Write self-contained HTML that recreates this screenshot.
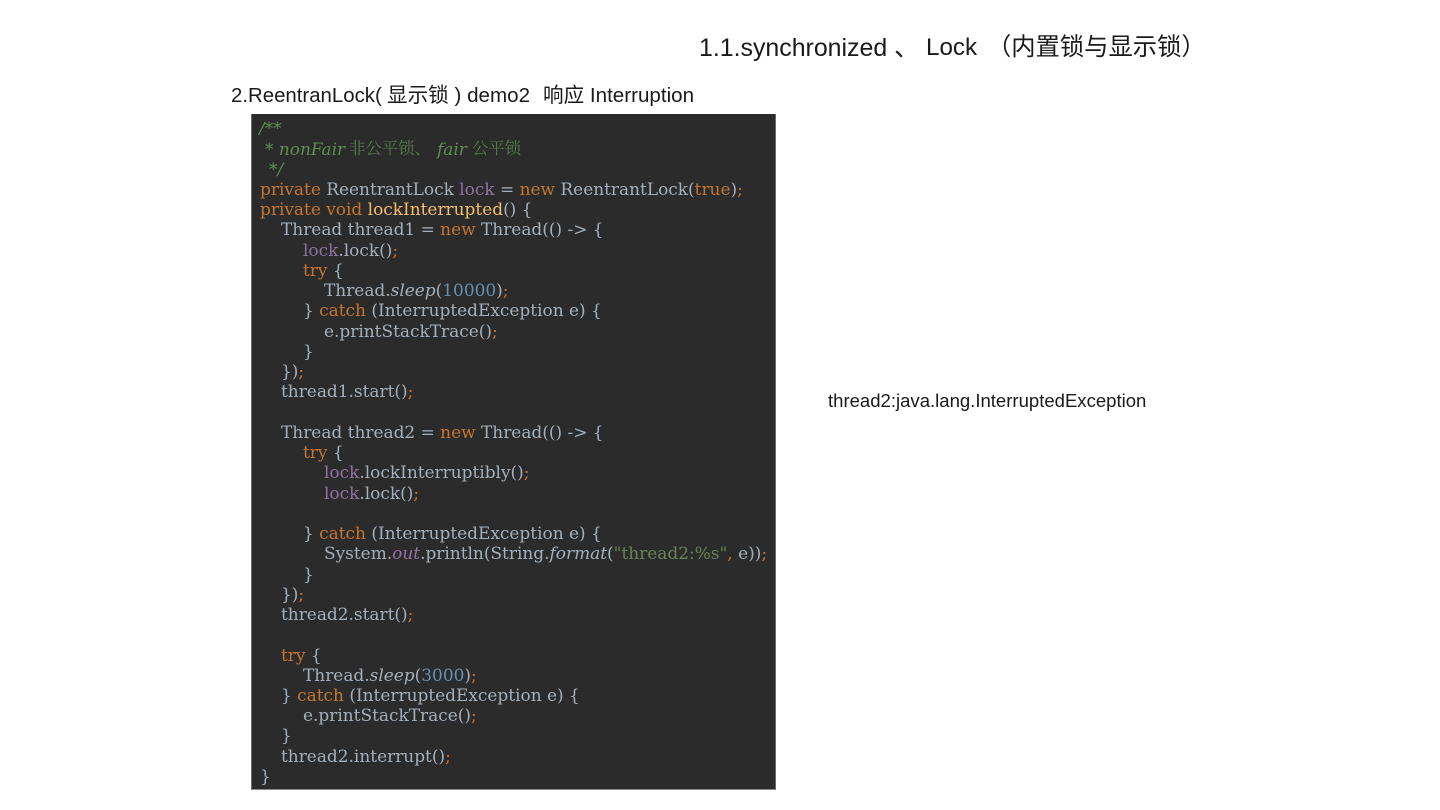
<!DOCTYPE html>
<html>
<head>
<meta charset="utf-8">
<style>
html,body{margin:0;padding:0;background:#fff;width:1440px;height:810px;overflow:hidden}
.t{position:absolute;white-space:pre;color:#1a1a1a;font-family:"Liberation Sans","Noto Sans CJK SC",sans-serif}
#box{position:absolute;left:251px;top:114px;width:525px;height:676px;background:#2b2b2b;box-sizing:border-box;border-left:1px solid #6a6a6a;border-right:1px solid #6a6a6a;border-bottom:1px solid #8a8a8a}
.l{position:absolute;white-space:pre;font-family:"DejaVu Serif","Noto Serif CJK SC",serif;font-size:16.96px;line-height:20px;color:#a3b0bd;left:260px;margin-top:0}
.k{color:#c5752f}
.p{color:#9272a3}
.m{color:#f5bf69}
.n{color:#6490b3}
.c{color:#5d8f51;font-style:italic}
.z{font-style:normal;position:absolute;top:0;font-size:16.4px;color:#527f48}
.s{color:#688357}
i{font-style:italic}
</style>
</head>
<body>
<div class="t" style="left:699px;top:33px;font-size:24.9px;line-height:30px">1.1.synchronized 、</div>
<div class="t" style="left:926px;top:33px;font-size:24.2px;line-height:30px">Lock</div>
<div class="t" style="left:987px;top:33px;font-size:24.3px;line-height:30px">（内置锁与显示锁）</div>
<div class="t" style="left:231px;top:82px;font-size:20.4px;line-height:28px">2.ReentranLock(</div>
<div class="t" style="left:387px;top:82px;font-size:20.6px;line-height:28px">显示锁 ) demo2</div>
<div class="t" style="left:543px;top:82px;font-size:20.6px;line-height:28px">响应 Interruption</div>
<div id="box"></div>
<div class="l c" style="top:118px;left:259px">/**</div>
<div class="l c" style="top:139px;left:265px;width:280px;height:20px">* nonFair<span class="z" style="left:84px">非公平锁、</span><span style="position:absolute;left:172px;top:0">fair</span><span class="z" style="left:207px">公平锁</span></div>
<div class="l c" style="top:159px;left:269px">*/</div>
<div class="l" style="top:179px"><span class="k">private</span> ReentrantLock <span class="p">lock</span> = <span class="k">new</span> ReentrantLock(<span class="k">true</span>)<span class="k">;</span></div>
<div class="l" style="top:199px"><span class="k">private void</span> <span class="m">lockInterrupted</span>() {</div>
<div class="l" style="top:219px;left:281px">Thread thread1 = <span class="k">new</span> Thread(() -&gt; {</div>
<div class="l" style="top:240px;left:303px"><span class="p">lock</span>.lock()<span class="k">;</span></div>
<div class="l" style="top:260px;left:303px"><span class="k">try</span> {</div>
<div class="l" style="top:280px;left:324px">Thread.<i>sleep</i>(<span class="n">10000</span>)<span class="k">;</span></div>
<div class="l" style="top:300px;left:303px">} <span class="k">catch</span> (InterruptedException e) {</div>
<div class="l" style="top:321px;left:324px">e.printStackTrace()<span class="k">;</span></div>
<div class="l" style="top:341px;left:303px">}</div>
<div class="l" style="top:361px;left:281px">})<span class="k">;</span></div>
<div class="l" style="top:381px;left:281px">thread1.start()<span class="k">;</span></div>
<div class="l" style="top:422px;left:281px">Thread thread2 = <span class="k">new</span> Thread(() -&gt; {</div>
<div class="l" style="top:442px;left:303px"><span class="k">try</span> {</div>
<div class="l" style="top:462px;left:324px"><span class="p">lock</span>.lockInterruptibly()<span class="k">;</span></div>
<div class="l" style="top:483px;left:324px"><span class="p">lock</span>.lock()<span class="k">;</span></div>
<div class="l" style="top:523px;left:303px">} <span class="k">catch</span> (InterruptedException e) {</div>
<div class="l" style="top:543px;left:324px">System.<i class="p">out</i>.println(String.<i>format</i>(<span class="s">"thread2:%s"</span><span class="k">,</span> e))<span class="k">;</span></div>
<div class="l" style="top:564px;left:303px">}</div>
<div class="l" style="top:584px;left:281px">})<span class="k">;</span></div>
<div class="l" style="top:604px;left:281px">thread2.start()<span class="k">;</span></div>
<div class="l" style="top:645px;left:281px"><span class="k">try</span> {</div>
<div class="l" style="top:665px;left:303px">Thread.<i>sleep</i>(<span class="n">3000</span>)<span class="k">;</span></div>
<div class="l" style="top:685px;left:281px">} <span class="k">catch</span> (InterruptedException e) {</div>
<div class="l" style="top:705px;left:303px">e.printStackTrace()<span class="k">;</span></div>
<div class="l" style="top:725px;left:281px">}</div>
<div class="l" style="top:746px;left:281px">thread2.interrupt()<span class="k">;</span></div>
<div class="l" style="top:766px">}</div>
<div class="t" style="left:828px;top:388px;font-size:18.55px;line-height:26px">thread2:java.lang.InterruptedException</div>
</body>
</html>
